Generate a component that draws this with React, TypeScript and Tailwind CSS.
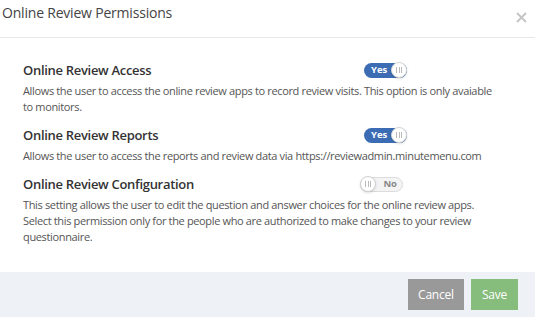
import React from "react";

type ToggleProps = { on: boolean };

const Grip = () => (
  <span className="flex gap-[1.5px]">
    <span className="w-px h-[6px] bg-[#bbb]"></span>
    <span className="w-px h-[6px] bg-[#bbb]"></span>
    <span className="w-px h-[6px] bg-[#bbb]"></span>
  </span>
);

const Toggle = ({ on }: ToggleProps) => {
  if (on) {
    return (
      <div className="w-[43px] h-[15px] rounded-full bg-[#3c6db4] flex items-center justify-between pl-[7px]">
        <span className="text-[9.5px] font-bold text-white leading-none">Yes</span>
        <span className="w-[16px] h-[16px] rounded-full bg-white border border-[#d5d5d5] flex items-center justify-center shadow-sm">
          <Grip />
        </span>
      </div>
    );
  }
  return (
    <div className="w-[43px] h-[15px] rounded-full bg-[#f4f4f4] border border-[#dcdcdc] flex items-center justify-between pr-[5px]">
      <span className="w-[16px] h-[16px] -ml-px rounded-full bg-white border border-[#d0d0d0] flex items-center justify-center shadow-sm">
        <Grip />
      </span>
      <span className="text-[9.5px] font-bold text-[#888] leading-none">No</span>
    </div>
  );
};

const sections = [
  {
    title: "Online Review Access",
    on: true,
    width: "w-[341px]",
    text: "Allows the user to access the online review apps to record review visits. This option is only avaiable to monitors.",
  },
  {
    title: "Online Review Reports",
    on: true,
    width: "w-[341px]",
    text: "Allows the user to access the reports and review data via https://reviewadmin.minutemenu.com",
  },
  {
    title: "Online Review Configuration",
    on: false,
    width: "w-[337px]",
    text: "This setting allows the user to edit the question and answer choices for the online review apps. Select this permission only for the people who are authorized to make changes to your review questionnaire.",
  },
];

const App = () => {
  return (
    <div
      className="w-[535px] h-[317px] bg-white flex flex-col overflow-hidden"
      style={{ fontFamily: '"Open Sans", sans-serif' }}
    >
      {/* header */}
      <div className="h-[38px] border-b border-[#e8e8e8] flex items-start justify-between pl-[2px] pr-[8px] pt-[3px]">
        <h2 className="text-[14px] tracking-[-0.2px] text-[#444] leading-[20px]">Online Review Permissions</h2>
        <svg width="11" height="11" viewBox="0 0 11 11" className="mt-[9px]">
          <path d="M1 1 L10 10 M10 1 L1 10" stroke="#c4c4c4" strokeWidth="1.8" />
        </svg>
      </div>

      {/* body */}
      <main className="flex-1 flex flex-col gap-[10px] pl-[23px] pr-[35px] pt-[22px]">
        {sections.map((s) => (
          <div key={s.title}>
            <div className="flex items-center h-[20px]">
              <h3 className={`${s.width} text-[13px] font-semibold tracking-[-0.3px] text-[#333] leading-[20px]`}>
                {s.title}
              </h3>
              <Toggle on={s.on} />
            </div>
            <p className="mt-[3px] text-[11px] tracking-[-0.35px] text-[#555] leading-[16px]">{s.text}</p>
          </div>
        ))}
      </main>

      {/* footer */}
      <div className="h-[45px] bg-[#eef1f5] flex items-center justify-end gap-[7px] pr-[17px]">
        <button className="w-[56px] h-[31px] bg-[#999] text-white text-[12px] tracking-[-0.2px]">Cancel</button>
        <button className="w-[47px] h-[31px] bg-[#86bc7c] text-white text-[12px] tracking-[-0.2px]">Save</button>
      </div>
    </div>
  );
};

export default App;
